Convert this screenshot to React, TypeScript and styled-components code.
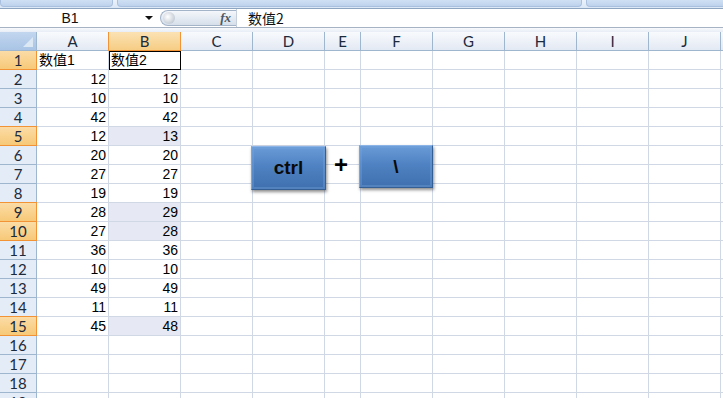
import styled, { createGlobalStyle } from "styled-components";

const GlobalStyle = createGlobalStyle`
  html, body {
    margin: 0;
    padding: 0;
    width: 723px;
    height: 398px;
    overflow: hidden;
    background: #ffffff;
    font-family: "Liberation Sans", "Noto Sans CJK SC", sans-serif;
  }
`;

const COLS = ["A", "B", "C", "D", "E", "F", "G", "H", "I", "J"];
const WIDTHS = [72, 72, 72, 72, 36, 72, 72, 72, 72, 72];
const VALUES: [number, number][] = [
  [12, 12], [10, 10], [42, 42], [12, 13], [20, 20], [27, 27], [19, 19],
  [28, 29], [27, 28], [36, 36], [10, 10], [49, 49], [11, 11], [45, 48],
];
const DIFF_ROWS = [5, 9, 10, 15];
const ROW_COUNT = 19;

const App = () => {
  const template = `37px ${WIDTHS.map((w) => `${w}px`).join(" ")} 1fr`;

  const cellFor = (row: number, col: number) => {
    if (row === 1) {
      if (col === 0) return <Cell key={col}>数值1</Cell>;
      if (col === 1)
        return (
          <Cell key={col} $active>
            数值2
          </Cell>
        );
      return <Cell key={col} />;
    }
    const data = VALUES[row - 2];
    if (data && col < 2) {
      const marked = col === 1 && DIFF_ROWS.includes(row);
      return (
        <Cell key={col} $num $marked={marked}>
          {data[col]}
        </Cell>
      );
    }
    return <Cell key={col} />;
  };

  return (
    <>
      <GlobalStyle />
      <Page>
        <Ribbon>
          <RibbonTab $w={113} />
          <RibbonTab $w={465} />
          <RibbonTab $w={140} />
        </Ribbon>
        <FormulaBar>
          <NameBox>
            <span>B1</span>
            <DropArrow />
          </NameBox>
          <FxCapsule>
            <Knob />
            <Fx>fx</Fx>
          </FxCapsule>
          <FormulaText>数值2</FormulaText>
        </FormulaBar>
        <Band />
        <Sheet>
          <Grid style={{ gridTemplateColumns: template }}>
            <Corner>
              <CornerMark />
            </Corner>
            {COLS.map((c) => (
              <ColHead key={c} $sel={c === "B"}>
                {c}
              </ColHead>
            ))}
            <ColHead />
            {Array.from({ length: ROW_COUNT }, (_, i) => i + 1).map((row) => (
              <Row key={row} row={row}>
                {COLS.map((_, col) => cellFor(row, col))}
              </Row>
            ))}
          </Grid>
          <Key $left={251} $top={114} $w={75} $h={44}>
            ctrl
          </Key>
          <Plus>+</Plus>
          <Key $left={359} $top={113} $w={74} $h={43}>
            \
          </Key>
        </Sheet>
      </Page>
    </>
  );
};

const Row = ({ row, children }: { row: number; children: React.ReactNode }) => (
  <>
    <RowHead $sel={row === 1 || DIFF_ROWS.includes(row)}>{row}</RowHead>
    {children}
    <Cell />
  </>
);

export default App;

const Page = styled.div`
  width: 723px;
  height: 398px;
  display: flex;
  flex-direction: column;
  overflow: hidden;
`;

const Ribbon = styled.div`
  display: flex;
  gap: 4px;
  background: linear-gradient(#eaf1fa, #dbe7f5);
  border-bottom: 1px solid #8ea5c2;
  box-sizing: border-box;
  height: 9px;
  padding-bottom: 1px;
`;

const RibbonTab = styled.div<{ $w: number }>`
  width: ${(p) => p.$w}px;
  flex: none;
  background: linear-gradient(#cfe0f4, #bdd2ec);
  border: 1px solid #a9c1df;
  border-top: none;
  border-radius: 0 0 4px 4px;
  box-sizing: border-box;
`;

const FormulaBar = styled.div`
  height: 18px;
  display: flex;
  align-items: stretch;
  background: #ffffff;
  border-bottom: 1px solid #a5b3c5;
`;

const NameBox = styled.div`
  width: 160px;
  position: relative;
  display: flex;
  align-items: center;
  justify-content: center;
  font-size: 14px;
  color: #111;
  span {
    margin-right: 20px;
  }
`;

const DropArrow = styled.div`
  position: absolute;
  right: 7px;
  top: 7px;
  width: 0;
  height: 0;
  border-left: 4px solid transparent;
  border-right: 4px solid transparent;
  border-top: 4px solid #111;
`;

const FxCapsule = styled.div`
  width: 76px;
  margin: 1px 0;
  display: flex;
  align-items: center;
  justify-content: space-between;
  padding: 0 5px 0 2px;
  box-sizing: border-box;
  background: linear-gradient(#f4f7fb, #d6dfea);
  border: 1px solid #a3b3c8;
  border-right: none;
  border-radius: 9px 0 0 9px;
`;

const Knob = styled.div`
  width: 12px;
  height: 12px;
  border-radius: 50%;
  background: radial-gradient(circle at 40% 40%, #ffffff, #aeb8c5);
`;

const Fx = styled.span`
  font-family: "Liberation Serif", serif;
  font-style: italic;
  font-weight: bold;
  font-size: 13px;
  color: #4d5663;
`;

const FormulaText = styled.div`
  display: flex;
  align-items: center;
  padding-left: 11px;
  border-left: 1px solid #c6d0dd;
  font-size: 14px;
  font-family: "Noto Sans CJK SC", sans-serif;
  color: #111;
  flex: 1;
`;

const Band = styled.div`
  height: 4px;
  background: linear-gradient(#f7f9fc, #e8eef6);
`;

const Sheet = styled.div`
  position: relative;
  flex: 1;
  overflow: hidden;
`;

const Grid = styled.div`
  display: grid;
  grid-auto-rows: 19px;
`;

const Corner = styled.div`
  position: relative;
  background: linear-gradient(#c2d6ef, #a9c4e6);
  border-right: 1px solid #9eb6ce;
  border-bottom: 1px solid #9eb6ce;
  box-sizing: border-box;
`;

const CornerMark = styled.div`
  position: absolute;
  right: 3px;
  bottom: 3px;
  width: 0;
  height: 0;
  border-left: 10px solid transparent;
  border-bottom: 10px solid #dde8f5;
`;

const ColHead = styled.div<{ $sel?: boolean }>`
  display: flex;
  align-items: center;
  justify-content: center;
  box-sizing: border-box;
  font-family: Lato, "Liberation Sans", sans-serif;
  font-size: 15px;
  color: #1c2a3b;
  background: ${(p) =>
    p.$sel
      ? "linear-gradient(#fbe2b4, #f6cd84)"
      : "linear-gradient(#f8fafd, #e3e9f3)"};
  border-right: 1px solid ${(p) => (p.$sel ? "#f29436" : "#9eb6ce")};
  border-bottom: 1px solid ${(p) => (p.$sel ? "#f29436" : "#9eb6ce")};
  ${(p) => (p.$sel ? "border-left: 1px solid #f29436; margin-left: -1px;" : "")}
`;

const RowHead = styled.div<{ $sel?: boolean }>`
  display: flex;
  align-items: center;
  justify-content: center;
  box-sizing: border-box;
  font-family: Lato, "Liberation Sans", sans-serif;
  font-size: 15px;
  color: #1c2a3b;
  background: ${(p) =>
    p.$sel ? "linear-gradient(#fbdca6, #f7c978)" : "#e4ecf7"};
  border-right: 1px solid ${(p) => (p.$sel ? "#f29436" : "#9eb6ce")};
  border-bottom: 1px solid ${(p) => (p.$sel ? "#f29436" : "#9eb6ce")};
  ${(p) => (p.$sel ? "border-top: 1px solid #f29436; margin-top: -1px;" : "")}
`;

const Cell = styled.div<{ $num?: boolean; $marked?: boolean; $active?: boolean }>`
  position: relative;
  display: flex;
  align-items: center;
  justify-content: ${(p) => (p.$num ? "flex-end" : "flex-start")};
  padding: 0 2px;
  box-sizing: border-box;
  font-size: 14px;
  line-height: 1;
  color: #000;
  white-space: nowrap;
  border-right: 1px solid #d0d7e5;
  border-bottom: 1px solid #d0d7e5;
  background: ${(p) => (p.$marked ? "#e6e9f3" : "#ffffff")};
  ${(p) => (p.$active ? `outline: 1px solid #000; outline-offset: -1px;` : "")}
`;

const Key = styled.div<{ $left: number; $top: number; $w: number; $h: number }>`
  position: absolute;
  left: ${(p) => p.$left}px;
  top: ${(p) => p.$top}px;
  width: ${(p) => p.$w}px;
  height: ${(p) => p.$h}px;
  box-sizing: border-box;
  display: flex;
  align-items: center;
  justify-content: center;
  font-size: 19px;
  font-weight: bold;
  color: #0a0a0a;
  background: linear-gradient(#6a9bd8 0%, #4f82c2 45%, #3f6fae 100%);
  border: 1px solid #345f95;
  border-top-color: #8db4e6;
  border-left-color: #7aa5dc;
  box-shadow: inset 0 0 0 2px rgba(120, 165, 220, 0.35),
    1px 2px 3px rgba(0, 0, 0, 0.45);
`;

const Plus = styled.div`
  position: absolute;
  left: 334px;
  top: 119px;
  font-size: 24px;
  font-weight: bold;
  color: #000;
`;
